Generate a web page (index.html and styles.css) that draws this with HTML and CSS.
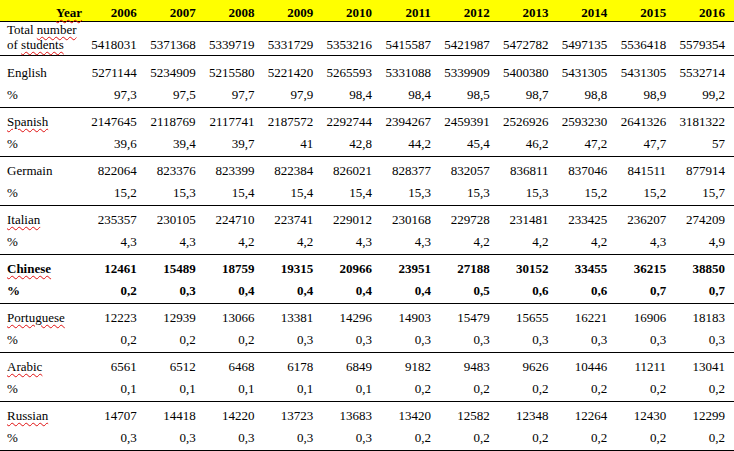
FILE: index.html
```html
<!DOCTYPE html>
<html lang="en">
<head>
<meta charset="utf-8">
<title>Students by language</title>
<link rel="stylesheet" href="styles.css">
</head>
<body>
<table class="stats">
  <colgroup>
    <col class="c-label">
    <col><col><col><col><col><col><col><col><col><col><col>
  </colgroup>
  <thead>
    <tr class="head">
      <th class="year"><span class="sp">Year</span></th>
      <th>2006</th><th>2007</th><th>2008</th><th>2009</th><th>2010</th><th>2011</th><th>2012</th><th>2013</th><th>2014</th><th>2015</th><th>2016</th>
    </tr>
  </thead>
  <tbody>
    <tr class="total end">
      <td class="lbl">Total <span class="sp">number</span> of <span class="sp">students</span></td>
      <td>5418031</td><td>5371368</td><td>5339719</td><td>5331729</td><td>5353216</td><td>5415587</td><td>5421987</td><td>5472782</td><td>5497135</td><td>5536418</td><td>5579354</td>
    </tr>
    <tr class="lang first">
      <td class="lbl">English</td>
      <td>5271144</td><td>5234909</td><td>5215580</td><td>5221420</td><td>5265593</td><td>5331088</td><td>5339909</td><td>5400380</td><td>5431305</td><td>5431305</td><td>5532714</td>
    </tr>
    <tr class="pct end">
      <td class="lbl">%</td>
      <td>97,3</td><td>97,5</td><td>97,7</td><td>97,9</td><td>98,4</td><td>98,4</td><td>98,5</td><td>98,7</td><td>98,8</td><td>98,9</td><td>99,2</td>
    </tr>
    <tr class="lang">
      <td class="lbl"><span class="sp">Spanish</span></td>
      <td>2147645</td><td>2118769</td><td>2117741</td><td>2187572</td><td>2292744</td><td>2394267</td><td>2459391</td><td>2526926</td><td>2593230</td><td>2641326</td><td>3181322</td>
    </tr>
    <tr class="pct end">
      <td class="lbl">%</td>
      <td>39,6</td><td>39,4</td><td>39,7</td><td>41</td><td>42,8</td><td>44,2</td><td>45,4</td><td>46,2</td><td>47,2</td><td>47,7</td><td>57</td>
    </tr>
    <tr class="lang">
      <td class="lbl">Germain</td>
      <td>822064</td><td>823376</td><td>823399</td><td>822384</td><td>826021</td><td>828377</td><td>832057</td><td>836811</td><td>837046</td><td>841511</td><td>877914</td>
    </tr>
    <tr class="pct end">
      <td class="lbl">%</td>
      <td>15,2</td><td>15,3</td><td>15,4</td><td>15,4</td><td>15,4</td><td>15,3</td><td>15,3</td><td>15,3</td><td>15,2</td><td>15,2</td><td>15,7</td>
    </tr>
    <tr class="lang">
      <td class="lbl"><span class="sp">Italian</span></td>
      <td>235357</td><td>230105</td><td>224710</td><td>223741</td><td>229012</td><td>230168</td><td>229728</td><td>231481</td><td>233425</td><td>236207</td><td>274209</td>
    </tr>
    <tr class="pct end">
      <td class="lbl">%</td>
      <td>4,3</td><td>4,3</td><td>4,2</td><td>4,2</td><td>4,3</td><td>4,3</td><td>4,2</td><td>4,2</td><td>4,2</td><td>4,3</td><td>4,9</td>
    </tr>
    <tr class="lang bold">
      <td class="lbl"><span class="sp">Chinese</span></td>
      <td>12461</td><td>15489</td><td>18759</td><td>19315</td><td>20966</td><td>23951</td><td>27188</td><td>30152</td><td>33455</td><td>36215</td><td>38850</td>
    </tr>
    <tr class="pct end bold">
      <td class="lbl">%</td>
      <td>0,2</td><td>0,3</td><td>0,4</td><td>0,4</td><td>0,4</td><td>0,4</td><td>0,5</td><td>0,6</td><td>0,6</td><td>0,7</td><td>0,7</td>
    </tr>
    <tr class="lang">
      <td class="lbl"><span class="sp">Portuguese</span></td>
      <td>12223</td><td>12939</td><td>13066</td><td>13381</td><td>14296</td><td>14903</td><td>15479</td><td>15655</td><td>16221</td><td>16906</td><td>18183</td>
    </tr>
    <tr class="pct end">
      <td class="lbl">%</td>
      <td>0,2</td><td>0,2</td><td>0,2</td><td>0,3</td><td>0,3</td><td>0,3</td><td>0,3</td><td>0,3</td><td>0,3</td><td>0,3</td><td>0,3</td>
    </tr>
    <tr class="lang">
      <td class="lbl"><span class="sp">Arabic</span></td>
      <td>6561</td><td>6512</td><td>6468</td><td>6178</td><td>6849</td><td>9182</td><td>9483</td><td>9626</td><td>10446</td><td>11211</td><td>13041</td>
    </tr>
    <tr class="pct end">
      <td class="lbl">%</td>
      <td>0,1</td><td>0,1</td><td>0,1</td><td>0,1</td><td>0,1</td><td>0,2</td><td>0,2</td><td>0,2</td><td>0,2</td><td>0,2</td><td>0,2</td>
    </tr>
    <tr class="lang">
      <td class="lbl"><span class="sp">Russian</span></td>
      <td>14707</td><td>14418</td><td>14220</td><td>13723</td><td>13683</td><td>13420</td><td>12582</td><td>12348</td><td>12264</td><td>12430</td><td>12299</td>
    </tr>
    <tr class="pct end">
      <td class="lbl">%</td>
      <td>0,3</td><td>0,3</td><td>0,3</td><td>0,3</td><td>0,3</td><td>0,2</td><td>0,2</td><td>0,2</td><td>0,2</td><td>0,2</td><td>0,2</td>
    </tr>
  </tbody>
</table>
</body>
</html>
```

FILE: styles.css
```css
html, body {
  margin: 0;
  padding: 0;
  background: #ffffff;
}

.stats {
  width: 734px;
  table-layout: fixed;
  border-collapse: collapse;
  border-spacing: 0;
  font-family: "Liberation Serif", "Times New Roman", serif;
  font-size: 13px;
  line-height: 15px;
  color: #000000;
}

.c-label {
  width: 87px;
}

.stats th,
.stats td {
  padding: 0 9px 3px 0;
  text-align: right;
  vertical-align: bottom;
  white-space: nowrap;
  font-weight: normal;
}

.stats .lbl {
  text-align: left;
  padding-left: 7px;
  padding-right: 0;
}

.head th {
  background: #ffff00;
  font-weight: bold;
  height: 20px;
  padding-bottom: 1px;
  border-bottom: 1px solid #000000;
}

.head .year {
  padding-right: 5px;
}

.total td {
  height: 27px;
  padding-bottom: 3px;
}

.total .lbl {
  white-space: normal;
}

.lang td {
  height: 21px;
  padding-bottom: 3px;
}

.lang.first td {
  height: 24px;
}

.pct td {
  height: 19px;
  padding-bottom: 5px;
}

.end td {
  border-bottom: 1px solid #000000;
}

.bold td {
  font-weight: bold;
}

.sp {
  text-decoration-line: underline;
  text-decoration-style: wavy;
  text-decoration-color: #e01010;
  text-decoration-thickness: 1px;
  text-underline-offset: 2px;
}
```
